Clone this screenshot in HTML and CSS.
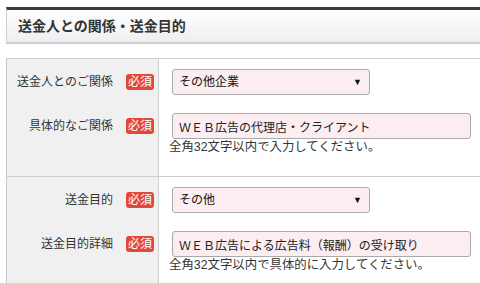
FILE: index.html
```html
<!DOCTYPE html>
<html lang="ja">
<head>
    <meta charset="UTF-8">
    <meta name="viewport" content="width=device-width, initial-scale=1.0">
    <title>送金人との関係・送金目的</title>
    <link rel="stylesheet" href="styles.css">
</head>
<body>

    <div class="section">
        <h2 class="section-title">送金人との関係・送金目的</h2>

        <div class="form-table">
            <div class="group">
                <div class="label-cell first">
                    <span class="label">送金人とのご関係</span>
                    <span class="required">必須</span>
                </div>
                <div class="field-cell first">
                    <div class="select-box">
                        <span class="select-value">その他企業</span>
                        <span class="select-arrow">▼</span>
                    </div>
                </div>
                <div class="label-cell">
                    <span class="label">具体的なご関係</span>
                    <span class="required">必須</span>
                </div>
                <div class="field-cell last">
                    <input class="text-input" type="text" value="ＷＥＢ広告の代理店・クライアント">
                    <p class="hint">全角32文字以内で入力してください。</p>
                </div>
            </div>

            <div class="group">
                <div class="label-cell first">
                    <span class="label">送金目的</span>
                    <span class="required">必須</span>
                </div>
                <div class="field-cell first">
                    <div class="select-box">
                        <span class="select-value">その他</span>
                        <span class="select-arrow">▼</span>
                    </div>
                </div>
                <div class="label-cell">
                    <span class="label">送金目的詳細</span>
                    <span class="required">必須</span>
                </div>
                <div class="field-cell last">
                    <input class="text-input" type="text" value="ＷＥＢ広告による広告料（報酬）の受け取り">
                    <p class="hint">全角32文字以内で具体的に入力してください。</p>
                </div>
            </div>
        </div>
    </div>

</body>
</html>
```

FILE: styles.css
```css
body {
    margin: 0;
    padding: 7px 0 0 6px;
    font-family: "Liberation Sans", "Noto Sans CJK JP", sans-serif;
    color: #333;
    background-color: #fff;
}
.section-title {
    margin: 0;
    height: 32px;
    line-height: 32px;
    padding-left: 11px;
    font-size: 14px;
    font-weight: bold;
    color: #333;
    border-top: 3px solid #3c3c3c;
    border-left: 1px solid #cfcfcf;
    border-bottom: 2px solid #cfcfcf;
    background: linear-gradient(#ffffff, #efeff2);
}
.form-table {
    margin-top: 14px;
    border-top: 1px solid #cfcfcf;
    border-left: 1px solid #c8c8cc;
}
.group {
    display: grid;
    grid-template-columns: 152px 1fr;
    border-bottom: 1px solid #cfcfcf;
}
.label-cell {
    display: flex;
    align-items: flex-start;
    justify-content: flex-end;
    padding-top: 18px;
    padding-right: 4px;
    background-color: #f0f0f0;
    border-right: 1px solid #cfcfcf;
}
.label-cell.first {
    padding-top: 10px;
}
.label {
    line-height: 16px;
    margin-top: 5px;
    font-size: 12px;
    color: #333;
}
.required {
    margin-left: 13px;
    margin-top: 5px;
    width: 28px;
    height: 16px;
    line-height: 16px;
    text-align: center;
    font-size: 12px;
    color: #fff;
    background-color: #e2483a;
    border-radius: 3px;
}
.field-cell {
    padding: 18px 0 0 13px;
}
.field-cell.first {
    padding-top: 10px;
}
.field-cell.last {
    padding-bottom: 20px;
}
.select-box {
    position: relative;
    width: 190px;
    height: 24px;
    line-height: 24px;
    padding-left: 6px;
    font-size: 12px;
    color: #111;
    background-color: #fcedf1;
    border: 1px solid #aaa;
    border-radius: 3px;
}
.select-arrow {
    position: absolute;
    right: 7px;
    top: 0;
    font-size: 9px;
    color: #111;
}
.text-input {
    display: block;
    width: 299px;
    height: 26px;
    box-sizing: border-box;
    margin: 0;
    padding: 0 6px;
    font-family: "Liberation Sans", "Noto Sans CJK JP", sans-serif;
    font-size: 12px;
    color: #222;
    background-color: #fcedf1;
    border: 1px solid #aaa;
    border-radius: 3px;
}
.hint {
    margin: 0 0 0 -3px;
    line-height: 17px;
    font-size: 12.4px;
    color: #333;
}
```
